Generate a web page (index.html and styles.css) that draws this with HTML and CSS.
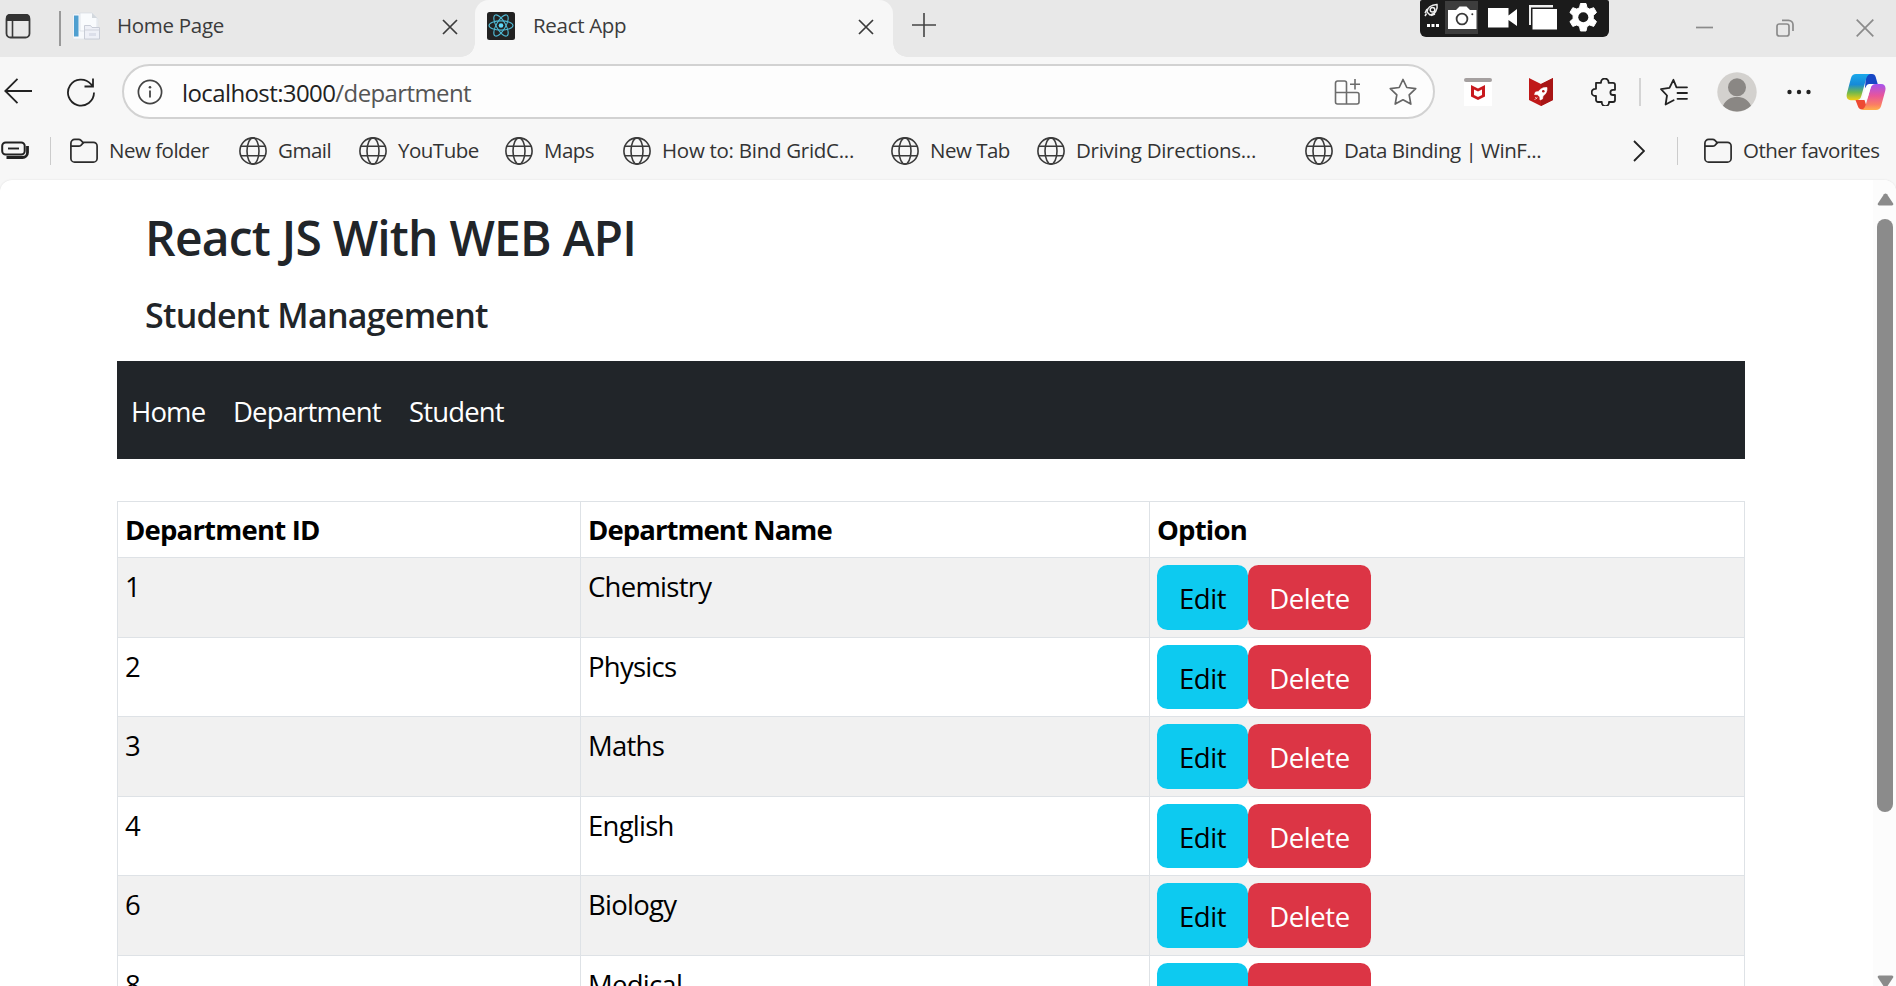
FILE: index.html
```
<!DOCTYPE html>
<html lang="en">
<head>
<meta charset="utf-8">
<title>React App</title>
<link rel="stylesheet" href="styles.css">
</head>
<body>
<svg class="defs" width="0" height="0">
  <symbol id="globe" viewBox="0 0 28 28"><g fill="none" stroke="#3b3b3b" stroke-width="1.6"><circle cx="14" cy="14" r="13.1"/><ellipse cx="14" cy="14" rx="6" ry="13.1"/><path d="M1.8 9.2h24.4M1.8 18.8h24.4"/></g></symbol>
  <symbol id="folder" viewBox="0 0 28 28"><g fill="none" stroke="#2b2b2b" stroke-width="1.7"><path d="M.9 6.2a3.8 3.8 0 0 1 3.8-3.8h3.9c1 0 1.7.3 2.4 1l1.8 1.9h10.6a3.7 3.7 0 0 1 3.7 3.7v12.4a3.7 3.7 0 0 1-3.7 3.7H4.600a3.7 3.7 0 0 1-3.7-3.7z"/><path d="M.9 9.200h7.800c.9 0 1.600-.3 2.200-.9l2.800-3"/></g></symbol>
  <symbol id="cross" viewBox="0 0 16 16"><path d="M1 1l14 14M15 1L1 15" fill="none" stroke="currentColor" stroke-width="1.7"/></symbol>
</svg>

<header class="tabstrip">
  <svg class="workspaces" width="26" height="26" viewBox="0 0 26 26"><rect x="1.500" y="2" width="23" height="22.500" rx="4" fill="none" stroke="#3a3a3a" stroke-width="1.800"/><path d="M1 8V5a4 4 0 0 1 4-4h16a4 4 0 0 1 4 4v3z" fill="#333"/><path d="M7.500 8v16" stroke="#3a3a3a" stroke-width="1.600"/></svg>
  <span class="strip-rule"></span>
  <div class="tab">
    <svg width="28" height="28" viewBox="0 0 28 28"><path d="M1 2h20l5 5v20H1z" fill="#f7f9fc" stroke="#dfe4ea" stroke-width=".7"/><path d="M2 3.500h4.500v21H2z" fill="#4f9fd0"/><path d="M8 1h12l5 5v13H8z" fill="#f9fbfd" stroke="#d5dbe2" stroke-width=".7"/><path d="M20 1v5h5z" fill="#d3d8dd"/><path d="M12.500 13.500h6l1.500 2h7.500v11.500h-15z" fill="#eef0f7" stroke="#c4c8d2" stroke-width=".9"/><path d="M12.500 18h15" stroke="#cfd2db"/><rect x="17" y="21" width="7" height="3" fill="#dcdfea"/></svg>
    <span class="tab-title home-title">Home Page</span>
    <svg class="tab-close" width="16" height="16"><use href="#cross"/></svg>
  </div>
  <div class="tab active">
    <svg width="28" height="28" viewBox="0 0 28 28"><rect width="28" height="28" rx="2.500" fill="#222"/><g fill="none" stroke="#4fb9d4" stroke-width="1.100"><ellipse cx="14" cy="13.500" rx="12" ry="4.600"/><ellipse cx="14" cy="13.500" rx="12" ry="4.600" transform="rotate(60 14 13.500)"/><ellipse cx="14" cy="13.500" rx="12" ry="4.600" transform="rotate(120 14 13.500)"/></g><circle cx="14" cy="13.500" r="2.300" fill="#61dafb"/></svg>
    <span class="tab-title react-title">React App</span>
    <svg class="tab-close" width="16" height="16"><use href="#cross"/></svg>
  </div>
  <svg class="new-tab" width="24" height="24" viewBox="0 0 24 24"><path d="M12 0v24M0 12h24" stroke="#444" stroke-width="1.600"/></svg>
  <div class="window-controls">
    <svg width="18" height="18" viewBox="0 0 18 18"><path d="M0 8.500h17" stroke="#8b8b8b" stroke-width="1.700"/></svg>
    <svg width="18" height="18" viewBox="0 0 18 18"><g fill="none" stroke="#8b8b8b" stroke-width="1.700"><rect x="1" y="5" width="12" height="12" rx="2.300"/><path d="M6 1.300h6.500A4.500 4.500 0 0 1 17 5.800V12"/></g></svg>
    <svg width="18" height="18" viewBox="0 0 18 18"><path d="M.7.7l16.600 16.600M17.300.7L.7 17.300" stroke="#8b8b8b" stroke-width="1.700"/></svg>
  </div>
</header>

<div class="recorder">
  <svg width="189" height="37" viewBox="0 0 189 37">
    <rect x="25" y="1" width="33" height="33" fill="#3d3d3d"/>
    <g fill="none" stroke="#eee" stroke-width="1.500"><path d="M7 12c0-4 4-7 10-7.500 1 4.500-2 10-7 10.500z"/><circle cx="12.500" cy="9.800" r="2.300"/><path d="M7 9l-2 4M11 15.500l4-1.500M6.500 13.500L5 16"/></g>
    <path d="M7 24h3v3H7zM11.500 24h3v3h-3zM16 24h3v3h-3z" fill="#fff"/>
    <path d="M28 10h8l3.500-3.500h7L50 10h6.500v19H28z" fill="#fff"/><circle cx="42" cy="19" r="5.400" fill="none" stroke="#3a3a3a" stroke-width="1.800"/><circle cx="52.300" cy="14.300" r="1" fill="#3a3a3a"/>
    <path d="M68 8h20.500v7.500L97 9v17l-8.500-6v7.500H68z" fill="#fff"/>
    <path d="M109 5h24v2.500H111V25h-2z" fill="#eee"/><rect x="112.500" y="9" width="24.500" height="20.500" fill="#fff"/>
    <path d="M160.500 3.500h5.500l1 4.200 2.600 1.400 4.100-1.400 2.800 4.800-3.200 2.900v3.300l3.200 2.900-2.800 4.800-4.100-1.400-2.600 1.500-1 4.500h-5.500l-1-4.500-2.700-1.500-4 1.400-2.900-4.800 3.200-2.900v-3.300l-3.200-2.900 2.900-4.800 4 1.400 2.700-1.400z" fill="#fff" stroke="#fff" stroke-linejoin="round"/><circle cx="163.300" cy="17.300" r="5" fill="#1b1b1b"/>
  </svg>
</div>

<div class="toolbar">
  <svg class="back" width="28" height="26" viewBox="0 0 28 26"><path d="M28 13H1.500M13.500.8L1.300 13l12.200 12.200" fill="none" stroke="#222" stroke-width="1.800"/></svg>
  <svg class="reload" width="30" height="30" viewBox="0 0 30 30"><path d="M28 15.500A13 13 0 1 1 24.800 7l2 2.200M27 1.500v8h-8.500" fill="none" stroke="#222" stroke-width="1.800"/></svg>
  <div class="address">
    <svg class="info" width="26" height="26" viewBox="0 0 26 26"><circle cx="13" cy="13" r="11.600" fill="none" stroke="#444" stroke-width="1.700"/><path d="M13 11.500v7" stroke="#444" stroke-width="1.800"/><circle cx="13" cy="8.300" r="1.300" fill="#444"/></svg>
    <span class="url">localhost:3000<span class="path">/department</span></span>
    <svg class="apps" width="26" height="26" viewBox="0 0 26 26"><g fill="none" stroke="#6c6c6c" stroke-width="1.600"><path d="M3.500 2h7a2 2 0 0 1 2 2v9.500H23a2 2 0 0 1 2 2V23a2 2 0 0 1-2 2H3.500a2 2 0 0 1-2-2V4a2 2 0 0 1 2-2zM1.500 13.500h11V25M21 0v10.500M16 5.300h10"/></g></svg>
    <svg class="star" width="28" height="28" viewBox="0 0 28 28"><path d="M14 1.500l3.800 8 8.900 1.200-6.500 6.100 1.600 9.300-7.800-4.300-7.800 4.300 1.600-9.300-6.500-6.100 8.900-1.200z" fill="none" stroke="#666" stroke-width="1.700" stroke-linejoin="round"/></svg>
  </div>
  <svg class="shield" width="28" height="28" viewBox="0 0 28 28"><path d="M0 4h28v24H0z" fill="#fff"/><rect width="28" height="4" rx="2" fill="#a5a0a0"/><path d="M7 7l7 3.500L21 7v11.500L14 22l-7-3.500z" fill="#c8191e"/><path d="M10 11.500l4 2 4-2V17l-4 2-4-2z" fill="#fff"/></svg>
  <svg class="booster" width="24" height="28" viewBox="0 0 24 28"><path d="M0 0l12 6 12-6v22l-12 6-12-6z" fill="#c01818"/><path d="M12 6l12-6v22l-12 6z" fill="#a81515"/><path d="M18 9.500c-4-.5-7 1.500-8.500 4l-3 .5-1 2.500 3 .2 2.300 2.300.2 3 2.500-1 .5-3c2.500-1.500 4.500-4.500 4-8.500zM6 19l2 2M5.500 22l3-3" fill="#fff" stroke="#fff" stroke-width=".6"/><circle cx="14.300" cy="13.200" r="1.300" fill="#b01616"/></svg>
  <svg class="puzzle" width="26" height="28" viewBox="0 0 26 28"><path d="M5 4.800h5v-.5a3.800 3.800 0 0 1 7.600 0v.5H22a2 2 0 0 1 2 2v5h-2a2.600 2.600 0 0 0 0 5.200h2v5a2 2 0 0 1-2 2h-4v.5a3.600 3.600 0 0 1-7.200 0V24H7a2 2 0 0 1-2-2v-4h-.7a3.600 3.600 0 0 1 0-7.200H5z" fill="none" stroke="#222" stroke-width="1.800" stroke-linejoin="round"/></svg>
  <span class="tool-rule"></span>
  <svg class="favorites" width="28" height="28" viewBox="0 0 28 28"><g fill="none" stroke="#222" stroke-width="1.800" stroke-linecap="round" stroke-linejoin="round"><path d="M16.500 9.300l-3.100-7.500-3.900 8-8.500 1.300L7 17.500 5.600 26.500l8-4.300M18 9.300h9M17.500 15h9.500M17.500 20.800h9.500M16.500 9.300h2"/></g></svg>
  <svg class="avatar" width="40" height="40" viewBox="0 0 40 40"><circle cx="20" cy="20" r="19.700" fill="#d3d1ce"/><circle cx="20" cy="15.300" r="9" fill="#8a8784"/><path d="M6 33.800C9 27.500 14 25 20 25s11 2.500 14 8.800A19.600 19.600 0 0 1 20 39.500 19.600 19.600 0 0 1 6 33.800z" fill="#8a8784"/></svg>
  <svg class="more" width="24" height="6" viewBox="0 0 24 6"><circle cx="2.500" cy="3" r="2.200"/><circle cx="12" cy="3" r="2.200"/><circle cx="21.500" cy="3" r="2.200"/></svg>
  <svg class="copilot" width="40" height="38" viewBox="0 0 40 38">
    <defs>
      <linearGradient id="cool" x1="0" y1="0" x2="0" y2="1"><stop offset="0" stop-color="#1aa8ea"/><stop offset=".4" stop-color="#168ad8"/><stop offset=".7" stop-color="#6fb84e"/><stop offset="1" stop-color="#f6cf13"/></linearGradient>
      <linearGradient id="warm" x1="0" y1="0" x2="0" y2="1"><stop offset="0" stop-color="#a553ee"/><stop offset=".45" stop-color="#e8559b"/><stop offset=".8" stop-color="#fb7f63"/><stop offset="1" stop-color="#ffb14a"/></linearGradient>
    </defs>
    <path d="M20 1h6c2 0 3.200 1.300 3.700 3l2 7H24l-5 4z" fill="#1747c5"/>
    <path d="M10 1h14c-2.500 1-3.400 3-4.200 6l-4.500 16c-.8 3-2.500 4.200-5.300 4.200H5C1 27 0 24 1 20L5 5c.8-2.700 2.300-4 5-4z" fill="url(#cool)"/>
    <path d="M9.500 27h9l3 9.500h-5.500c-2.300 0-3.500-1.200-4.200-3.500z" fill="#ee4a32"/>
    <path d="M30 37H15.500c2.500-1 3.600-3 4.500-6l4.500-15.500c.8-3 2.500-4.500 5.300-4.500H35c4 0 5.200 3 4.200 7l-4.100 15c-.8 2.700-2.400 4-5.100 4z" fill="url(#warm)"/>
    <path d="M25.500 11h-2c-2 0-3 1.200-3.600 3L16 26.500h3.200c1.500 0 2.200-.8 2.600-2.300l2.700-9.200c.4-1.600 1-3 2.500-4z" fill="#fff"/>
  </svg>
</div>

<nav class="bookmarks">
  <svg class="stack" width="28" height="20" viewBox="0 0 28 20"><g fill="none" stroke="#222" stroke-width="2"><rect x="1.200" y="1.500" width="22.500" height="12" rx="3.500"/><path d="M7 7.500h11" stroke-width="1.900"/><path d="M26.500 5v6.500a5 5 0 0 1-5 5H5.500" stroke-width="2.800"/></g></svg>
  <span class="book-rule"></span>
  <a class="book w169"><svg width="28" height="28"><use href="#folder"/></svg><span>New folder</span></a>
  <a class="book w120"><svg width="28" height="28"><use href="#globe"/></svg><span>Gmail</span></a>
  <a class="book w146"><svg width="28" height="28"><use href="#globe"/></svg><span>YouTube</span></a>
  <a class="book w118"><svg width="28" height="28"><use href="#globe"/></svg><span>Maps</span></a>
  <a class="book long w268"><svg width="28" height="28"><use href="#globe"/></svg><span>How to: Bind GridC...</span></a>
  <a class="book w146"><svg width="28" height="28"><use href="#globe"/></svg><span>New Tab</span></a>
  <a class="book long w268"><svg width="28" height="28"><use href="#globe"/></svg><span>Driving Directions...</span></a>
  <a class="book w328"><svg width="28" height="28"><use href="#globe"/></svg><span>Data Binding | WinF...</span></a>
  <svg class="chevron" width="12" height="22" viewBox="0 0 12 22"><path d="M1 1l10 10L1 21" fill="none" stroke="#222" stroke-width="1.800"/></svg>
  <span class="book-rule last"></span>
  <a class="book"><svg width="28" height="28"><use href="#folder"/></svg><span>Other favorites</span></a>
</nav>

<div class="viewport">
  <main class="page">
    <h3>React JS With WEB API</h3>
    <h5>Student Management</h5>
    <nav class="menu"><a class="m-home">Home</a><a class="m-dept">Department</a><a>Student</a></nav>
    <table>
      <thead><tr><th class="c-id">Department ID</th><th class="c-name">Department Name</th><th>Option</th></tr></thead>
      <tbody>
        <tr><td>1</td><td>Chemistry</td><td><div class="actions"><button class="edit">Edit</button><button class="delete">Delete</button></div></td></tr>
        <tr><td>2</td><td>Physics</td><td><div class="actions"><button class="edit">Edit</button><button class="delete">Delete</button></div></td></tr>
        <tr><td>3</td><td>Maths</td><td><div class="actions"><button class="edit">Edit</button><button class="delete">Delete</button></div></td></tr>
        <tr><td>4</td><td>English</td><td><div class="actions"><button class="edit">Edit</button><button class="delete">Delete</button></div></td></tr>
        <tr><td>6</td><td>Biology</td><td><div class="actions"><button class="edit">Edit</button><button class="delete">Delete</button></div></td></tr>
        <tr><td>8</td><td>Medical</td><td><div class="actions"><button class="edit">Edit</button><button class="delete">Delete</button></div></td></tr>
      </tbody>
    </table>
  </main>
  <div class="scrollbar">
    <svg width="17" height="13" viewBox="0 0 17 13"><path d="M7 1.200q1.500-1.600 3 0l6 9q1 2-1 2.300H2q-2-.3-1-2.300z" fill="#8b8b8b"/></svg>
    <span class="thumb"></span>
    <svg class="down" width="17" height="13" viewBox="0 0 17 13"><path d="M7 11.800q1.500 1.600 3 0l6-9q1-2-1-2.300H2q-2 .3-1 2.300z" fill="#8b8b8b"/></svg>
  </div>
</div>
</body>
</html>
```
FILE: styles.css
```
* { box-sizing: border-box; }
html, body { height: 100%; }
body {
  margin: 0;
  height: 986px;
  overflow: hidden;
  display: flex;
  flex-direction: column;
  background: #f7f7f7;
  font-family: "Open Sans", "Noto Sans", sans-serif;
  color: #212529;
}
svg { display: block; flex: none; }
.defs { position: absolute; }

/* Tab strip */
.tabstrip {
  flex: none;
  height: 57px;
  display: flex;
  align-items: flex-start;
  background: #e8e8e8;
  color: #3b3b3b;
}
.workspaces { margin: 13px 0 0 5px; }
.strip-rule { width: 2px; height: 35px; margin: 11px 0 0 28px; background: #999; }
.tab {
  width: 414px;
  height: 57px;
  padding: 12px 17px 0 11px;
  display: flex;
  align-items: flex-start;
}
.tab.active {
  position: relative;
  width: 418px;
  padding: 12px 19px 0 12px;
  background: #f7f7f7;
  border-radius: 14px 14px 0 0;
}
.tab.active::before, .tab.active::after {
  content: "";
  position: absolute;
  bottom: 0;
  width: 14px;
  height: 14px;
}
.tab.active::before { left: -14px; background: radial-gradient(circle at 0 0, #e8e8e8 13.5px, #f7f7f7 14px); }
.tab.active::after { right: -14px; background: radial-gradient(circle at 100% 0, #e8e8e8 13.5px, #f7f7f7 14px); }
.tab-title { margin-left: 17px; font-size: 20.5px; line-height: 27px; white-space: nowrap; letter-spacing: -0.3px; }
.react-title { margin-left: 18px; }
.tab-close { margin: 7px 0 0 auto; }
.new-tab { margin: 13px 0 0 19px; }
.window-controls { display: flex; gap: 62px; margin: 19px 22px 0 auto; }

.recorder {
  position: absolute;
  left: 1420px;
  top: 0;
  width: 189px;
  height: 37px;
  background: #1b1b1b;
  border-radius: 2px 2px 6px 6px;
}

/* Address row */
.toolbar { flex: none; height: 70px; display: flex; align-items: center; }
.back { margin: 0 0 2px 4px; }
.reload { margin-left: 34px; }
.address {
  width: 1313px;
  height: 55px;
  margin: 0 0 1px 26px;
  padding: 0 16px 0 13px;
  display: flex;
  align-items: center;
  border: 2px solid #d2d2d2;
  border-radius: 28px;
  background: #fdfdfd;
}
.url { margin-left: 19px; padding-top: 2px; font-size: 24px; line-height: 34px; color: #222; letter-spacing: -0.6px; }
.path { color: #555; }
.apps { margin-left: auto; }
.star { margin-left: 29px; }
.shield { margin-left: 29px; }
.booster { margin-left: 37px; }
.puzzle { margin-left: 38px; }
.tool-rule { width: 2px; height: 28px; margin-left: 22px; background: #d4d4d4; }
.favorites { margin-left: 19px; }
.avatar { margin-left: 29px; }
.more { margin-left: 30px; fill: #222; }
.copilot { margin: 0 0 0 35px; }

/* Bookmarks row */
.bookmarks { flex: none; height: 53px; padding-bottom: 5px; display: flex; align-items: center; color: #333; }
.stack { margin-left: 1px; }
.book-rule { width: 1px; height: 28px; margin: 0 19px 0 21px; background: #ccc; }
.book-rule.last { margin: 0 26px 0 32px; }
.book { display: flex; align-items: center; gap: 11px; flex: none; font-size: 20.5px; line-height: 28px; white-space: nowrap; letter-spacing: -0.5px; }
.book.long { letter-spacing: -0.28px; }
.book span { padding-bottom: 2px; }
.w118 { width: 118px; }
.w120 { width: 120px; }
.w146 { width: 146px; }
.w169 { width: 169px; }
.w268 { width: 268px; }
.w328 { width: 328px; }

/* Page */
.viewport {
  flex: 1;
  min-height: 0;
  display: flex;
  overflow: hidden;
  background: #fff;
  border-radius: 12px 12px 0 0;
  box-shadow: 0 0 2px #ddd;
}
.page { width: 1628px; margin-left: 117px; }
h3, h5 { margin: 0; padding-left: 28px; font-weight: 600; white-space: nowrap; }
h3 { padding-top: 28px; font-size: 48px; line-height: 59px; letter-spacing: -0.78px; }
h5 { padding-top: 27px; font-size: 34px; line-height: 42px; letter-spacing: -0.75px; }
.menu {
  height: 98px;
  margin-top: 25px;
  padding: 2px 14px 0;
  display: flex;
  gap: 28px;
  align-items: center;
  background: #212529;
  color: #fff;
  font-size: 27.5px;
  letter-spacing: -0.85px;
}
.m-home { width: 74px; }
.m-dept { width: 148px; }
table {
  width: 1628px;
  margin-top: 42px;
  border-collapse: collapse;
  table-layout: fixed;
  font-size: 27.5px;
  line-height: 42px;
  letter-spacing: -0.75px;
  color: #000;
}
.c-id { width: 463px; }
.c-name { width: 569px; }
th, td { padding: 7px; border: 1px solid #dee2e6; text-align: left; vertical-align: top; }
thead th { height: 56px; padding-bottom: 6px; letter-spacing: -0.8px; }
thead .c-name { letter-spacing: -0.93px; }
tbody td { height: 80px; padding: 8px 7px 6px; }
tbody tr:nth-child(even) td { height: 79px; }
td:last-child, tbody tr:nth-child(even) td:last-child { padding-top: 7px; }
tbody tr:nth-child(odd) { background: #f1f1f1; }
.actions { display: flex; height: 65px; }
tr:nth-child(even) .actions { height: 64px; }
button {
  border: 0;
  padding: 3px 0 0;
  border-radius: 10.5px;
  font: inherit;
  letter-spacing: -0.45px;
}
.edit { width: 91px; background: #0dcaf0; color: #000; }
.delete { width: 123px; background: #dc3545; color: #fff; }

.scrollbar {
  width: 23px;
  margin-left: auto;
  padding: 13px 3px 0 4px;
  background: #fcfcfc;
}
.thumb { display: block; width: 16px; height: 593px; margin: 13px 0 163px; border-radius: 8px; background: #8b8b8b; }
```
